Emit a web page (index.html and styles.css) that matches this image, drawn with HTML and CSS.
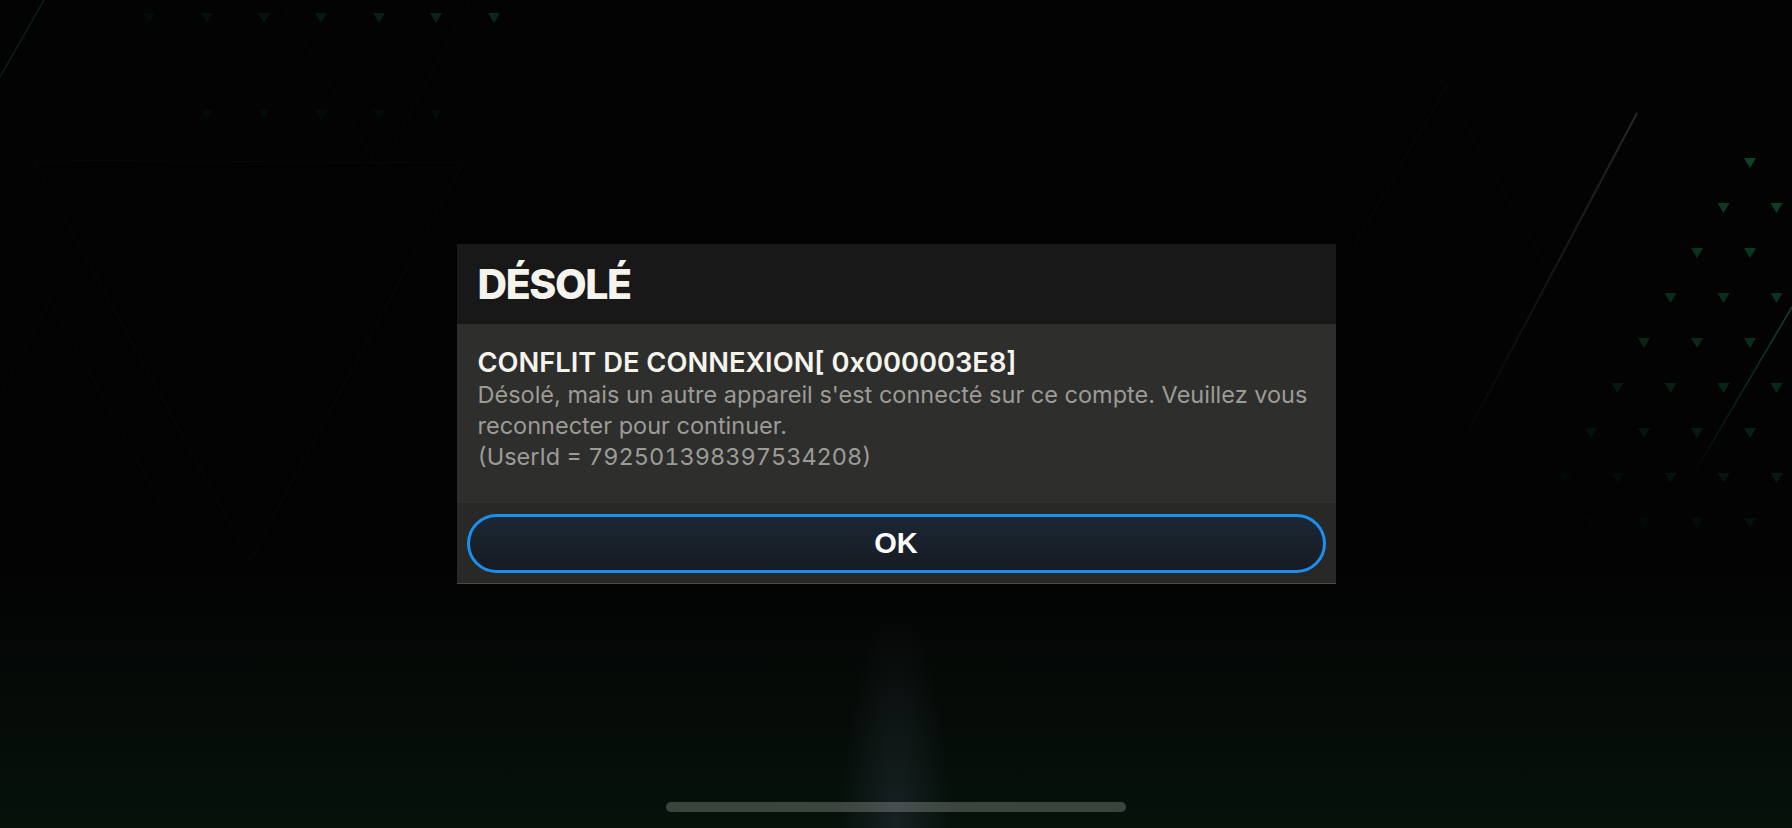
FILE: index.html
```html
<!DOCTYPE html>
<html lang="fr">
<head>
    <meta charset="UTF-8">
    <meta name="viewport" content="width=device-width, initial-scale=1.0">
    <title>Désolé</title>
    <link rel="stylesheet" href="styles.css">
</head>
<body>
    <div class="screen">
        <!-- decorative backdrop: faint triangles, lines and floor glow -->
        <svg class="backdrop" viewBox="0 0 1792 828" preserveAspectRatio="none" aria-hidden="true">
            <defs>
                <radialGradient id="beam" cx="896" cy="828" r="120" gradientUnits="userSpaceOnUse" gradientTransform="translate(896 828) scale(0.45 1.8) translate(-896 -828)">
                    <stop offset="0" stop-color="#27303a" stop-opacity="0.5"/>
                    <stop offset="1" stop-color="#27303a" stop-opacity="0"/>
                </radialGradient>
                <linearGradient id="floor" x1="0" y1="560" x2="0" y2="828" gradientUnits="userSpaceOnUse">
                    <stop offset="0" stop-color="#06100a" stop-opacity="0"/>
                    <stop offset="1" stop-color="#07120b"/>
                </linearGradient>
                <pattern id="tri" patternUnits="userSpaceOnUse" x="1744" y="158" width="53" height="90">
                    <polygon points="0,0 12,0 6,10" fill="#0c4529"/>
                    <polygon points="26.5,45 38.5,45 32.5,55" fill="#0c4529"/>
                </pattern>
                <linearGradient id="triFade" x1="1790" y1="150" x2="1560" y2="540" gradientUnits="userSpaceOnUse">
                    <stop offset="0" stop-color="#fff" stop-opacity="1"/>
                    <stop offset="0.45" stop-color="#fff" stop-opacity="0.6"/>
                    <stop offset="0.8" stop-color="#fff" stop-opacity="0.15"/>
                    <stop offset="1" stop-color="#fff" stop-opacity="0"/>
                </linearGradient>
                <mask id="triMask">
                    <polygon points="1738,150 1800,150 1800,560 1500,560" fill="url(#triFade)"/>
                </mask>
                <linearGradient id="greyLine" x1="1637" y1="113" x2="1460" y2="447" gradientUnits="userSpaceOnUse">
                    <stop offset="0" stop-color="#262626"/>
                    <stop offset="1" stop-color="#262626" stop-opacity="0"/>
                </linearGradient>
                <linearGradient id="greenLine" x1="1792" y1="307" x2="1690" y2="480" gradientUnits="userSpaceOnUse">
                    <stop offset="0" stop-color="#0e4427"/>
                    <stop offset="1" stop-color="#0e4427" stop-opacity="0"/>
                </linearGradient>
            </defs>

            <rect x="0" y="560" width="1792" height="268" fill="url(#floor)"/>
            <rect x="790" y="600" width="212" height="228" fill="url(#beam)"/>

            <g fill="none" stroke="#090909" stroke-width="1">
                <polyline points="33,160 463,163 250,560 33,160"/>
                <polyline points="50,300 0,395"/>
                <polyline points="50,300 170,520"/>
                <polyline points="280,0 380,170 470,0"/>
                <polyline points="1450,80 1350,253"/>
                <polyline points="1440,80 1560,290"/>
            </g>
            <line x1="0" y1="77" x2="44" y2="0" stroke="#0a2617" stroke-width="1.2"/>
            <line x1="1637" y1="113" x2="1460" y2="447" stroke="url(#greyLine)" stroke-width="2"/>
            <line x1="1792" y1="307" x2="1690" y2="480" stroke="url(#greenLine)" stroke-width="1.6"/>

            <rect x="1500" y="150" width="292" height="410" fill="url(#tri)" mask="url(#triMask)"/>

            <g fill="#0b3520">
                <polygon points="143,13 155,13 149,23" opacity="0.15"/>
                <polygon points="201,13 213,13 207,23" opacity="0.25"/>
                <polygon points="258,13 270,13 264,23" opacity="0.35"/>
                <polygon points="315,13 327,13 321,23" opacity="0.45"/>
                <polygon points="373,13 385,13 379,23" opacity="0.55"/>
                <polygon points="430,13 442,13 436,23" opacity="0.65"/>
                <polygon points="488,13 500,13 494,23" opacity="0.75"/>
            </g>
            <g fill="#081a10" opacity="0.35">
                <polygon points="201,110 213,110 207,120"/>
                <polygon points="258,110 270,110 264,120"/>
                <polygon points="315,110 327,110 321,120"/>
                <polygon points="373,110 385,110 379,120"/>
                <polygon points="430,110 442,110 436,120"/>
            </g>
        </svg>

        <div class="dialog">
            <div class="dialog-head">
                <h1 class="dialog-title">DÉSOLÉ</h1>
            </div>
            <div class="dialog-body">
                <h2 class="dialog-subtitle">CONFLIT DE CONNEXION[ 0x000003E8]</h2>
                <p class="dialog-text">Désolé, mais un autre appareil s'est connecté sur ce compte. Veuillez vous reconnecter pour continuer.<br><span class="user-id">(UserId = 792501398397534208)</span></p>
            </div>
            <div class="dialog-foot">
                <button class="ok-button">OK</button>
            </div>
        </div>

        <div class="home-bar"></div>
    </div>
</body>
</html>
```

FILE: styles.css
```css
body {
    margin: 0;
    background: #030303;
    font-family: 'Inter', 'Liberation Sans', sans-serif;
    overflow: hidden;
}

.screen {
    position: relative;
    width: 1792px;
    height: 828px;
    display: flex;
    align-items: center;
    justify-content: center;
}

.backdrop {
    position: absolute;
    left: 0;
    top: 0;
    width: 100%;
    height: 100%;
}

.dialog {
    position: relative;
    width: 879px;
    display: flex;
    flex-direction: column;
}

.dialog-head {
    height: 80px;
    background: #181818;
    padding: 0 21px;
    display: flex;
    align-items: center;
}

.dialog-title {
    margin: 0;
    font-size: 41px;
    font-weight: 800;
    letter-spacing: -1.4px;
    color: #f4f4ed;
    line-height: 1;
}

.dialog-body {
    height: 179px;
    box-sizing: border-box;
    background: #2e2e2c;
    padding: 23px 21px 0;
}

.dialog-subtitle {
    margin: 0;
    font-size: 27.3px;
    font-weight: 600;
    line-height: 32px;
    color: #f4f4ed;
}

.dialog-text {
    margin: 0;
    font-size: 23.5px;
    line-height: 31px;
    color: #9c9c97;
}

.user-id {
    font-variant-numeric: tabular-nums;
}

.dialog-foot {
    height: 81px;
    box-sizing: border-box;
    background: #282827;
    border-bottom: 1px solid #4a4a48;
    padding: 11px 10px 0;
}

.ok-button {
    display: block;
    width: 100%;
    height: 59px;
    border: 3px solid #1a8ff0;
    border-radius: 30px;
    background: linear-gradient(#1c2834, #171b22);
    color: #ffffff;
    font-family: 'Liberation Sans', Arial, sans-serif;
    font-weight: 700;
    font-size: 29px;
    padding: 0;
    cursor: pointer;
}

.home-bar {
    position: absolute;
    left: 666px;
    bottom: 16px;
    width: 460px;
    height: 10px;
    border-radius: 5px;
    background: linear-gradient(90deg, #3b443b 0%, #3d463e 38%, #484e50 50%, #3d463e 62%, #3b443b 100%);
}
```
